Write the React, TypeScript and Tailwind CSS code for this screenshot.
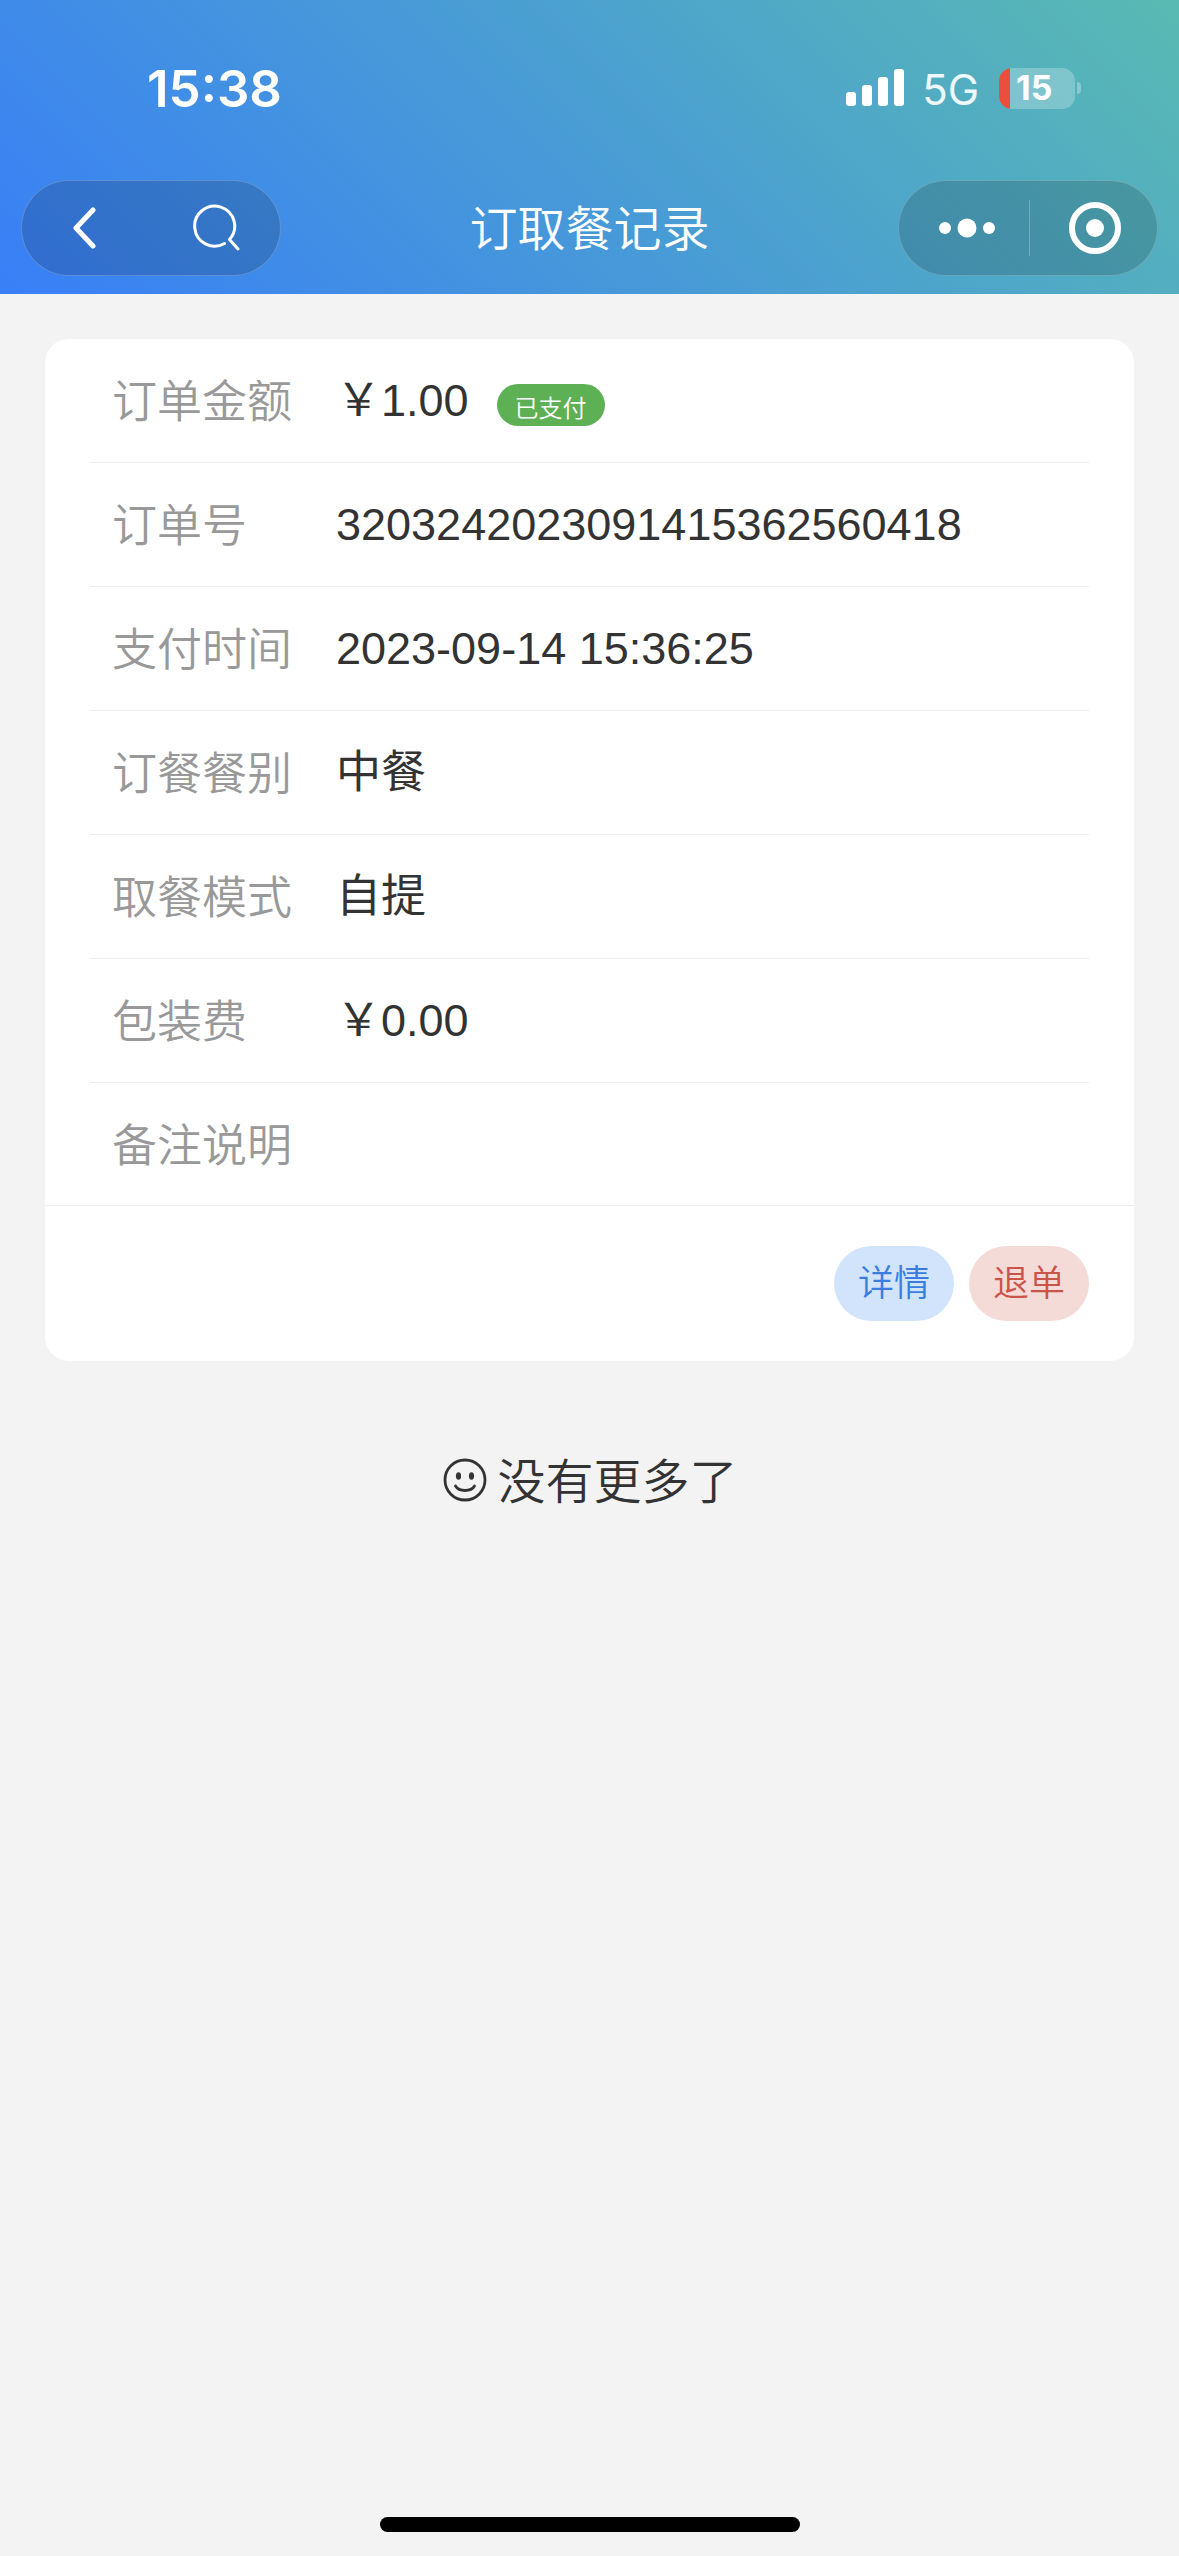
import type { ReactNode } from 'react';

type Field = {
  label: string;
  value: ReactNode;
};

const fields: Field[] = [
  {
    label: '订单金额',
    value: (
      <>
        ￥1.00
        <span className="mt-2 ml-7 flex h-[42px] items-center rounded-full bg-[#5db154] px-[18px] pt-2 text-[24px] leading-none font-[350] text-white">
          已支付
        </span>
      </>
    ),
  },
  { label: '订单号', value: '3203242023091415362560418' },
  { label: '支付时间', value: '2023-09-14 15:36:25' },
  { label: '订餐餐别', value: '中餐' },
  { label: '取餐模式', value: '自提' },
  { label: '包装费', value: '￥0.00' },
  { label: '备注说明', value: '' },
];

function StatusBar() {
  return (
    <div className="flex h-[176px] items-center justify-between pr-[98px] pl-[147px] font-['Inter',sans-serif] text-white">
      <span className="text-[51px] leading-none font-semibold">15:38</span>
      <div className="flex items-center">
        <svg width="58" height="38" viewBox="0 0 58 38" fill="currentColor" aria-hidden="true">
          <rect x="0" y="23" width="10" height="14" rx="3" />
          <rect x="16" y="16" width="10" height="21" rx="3" />
          <rect x="32" y="8" width="10" height="29" rx="3" />
          <rect x="48" y="0" width="10" height="37" rx="3" />
        </svg>
        <span className="mt-1 ml-[18px] text-[42px] leading-none text-white/90">5G</span>
        <div className="ml-5 flex items-center gap-[2px]">
          <div className="flex h-[41px] w-[76px] items-center overflow-hidden rounded-[13px] bg-white/25">
            <span className="h-full w-[11px] bg-[#ea4e3d]" />
            <span className="ml-[6px] text-[34px] leading-none font-bold">15</span>
          </div>
          <span className="h-3 w-1 rounded-r-full bg-white/30" />
        </div>
      </div>
    </div>
  );
}

function NavBar() {
  return (
    <nav className="mt-1 flex h-24 items-center justify-between px-[21px] text-white">
      <div className="flex h-full w-[260px] items-center rounded-full border border-white/20 bg-black/15">
        <button type="button" aria-label="返回" className="flex h-full flex-1 items-center justify-center">
          <svg width="28" height="46" viewBox="0 0 28 46" fill="none" stroke="currentColor" strokeWidth="5" strokeLinecap="round" strokeLinejoin="round">
            <path d="M20 5 L3 23 L20 41" />
          </svg>
        </button>
        <button type="button" aria-label="搜索" className="flex h-full flex-1 items-center justify-center">
          <svg width="48" height="48" viewBox="0 0 48 48" fill="none" stroke="currentColor" strokeWidth="3" strokeLinecap="round" strokeLinejoin="round">
            <path d="M32.5 39.5 A20 20 0 1 1 37.5 35.5 L46 45" />
          </svg>
        </button>
      </div>

      <h1 className="pt-1 text-[48px] leading-none font-[350]">订取餐记录</h1>

      <div className="flex h-full w-[260px] items-center rounded-full border border-white/20 bg-black/15">
        <button type="button" aria-label="更多" className="flex h-full flex-1 items-center justify-center pl-[6px]">
          <svg width="58" height="20" viewBox="0 0 58 20" fill="currentColor">
            <circle cx="7" cy="10" r="6" />
            <circle cx="29" cy="10" r="9.5" />
            <circle cx="51" cy="10" r="6" />
          </svg>
        </button>
        <span className="h-14 w-px bg-white/25" />
        <button type="button" aria-label="关闭" className="flex h-full flex-1 items-center justify-center pl-[3px]">
          <svg width="54" height="54" viewBox="0 0 54 54">
            <circle cx="27" cy="27" r="23" fill="none" stroke="currentColor" strokeWidth="6" />
            <circle cx="27" cy="27" r="9" fill="currentColor" />
          </svg>
        </button>
      </div>
    </nav>
  );
}

function OrderCard() {
  return (
    <section className="mx-[45px] mt-[45px] rounded-[24px] bg-white">
      <dl className="px-[45px]">
        {fields.map(({ label, value }, i) => (
          <div
            key={label}
            className={`flex items-center px-[22px] text-[45px] leading-none ${
              i < fields.length - 1 ? 'h-[124px] border-b border-[#eeeeee]' : 'h-[122px]'
            }`}
          >
            <dt className="w-[224px] shrink-0 pt-1 font-[350] text-[#999999]">{label}</dt>
            <dd className="flex items-center text-[#333333]">{value}</dd>
          </div>
        ))}
      </dl>
      <div className="flex justify-end gap-[15px] border-t border-[#eeeeee] px-[45px] py-10 text-[36px] leading-none font-[350]">
        <button type="button" className="h-[75px] rounded-full bg-[#d2e4fb] px-6 text-[#3a7de0]">
          详情
        </button>
        <button type="button" className="h-[75px] rounded-full bg-[#f5dbd8] px-6 text-[#cb544a]">
          退单
        </button>
      </div>
    </section>
  );
}

export default function App() {
  return (
    <div className="flex min-h-screen flex-col bg-[#f3f3f3] font-['Liberation_Sans','Noto_Sans_CJK_SC',sans-serif]">
      <header className="bg-[linear-gradient(45deg,#387ff7,#59bab2)] pb-[18px]">
        <StatusBar />
        <NavBar />
      </header>

      <main className="flex-1">
        <OrderCard />
        <p className="mt-[94px] flex items-center justify-center gap-2 text-[48px] leading-none text-[#333333]">
          <svg width="48" height="48" viewBox="0 0 48 48" fill="none" stroke="currentColor" strokeLinecap="round" aria-hidden="true">
            <circle cx="24" cy="23" r="20" strokeWidth="2.8" />
            <path d="M14.5 29 C18 35 30 35 33.5 29" strokeWidth="2.8" />
            <ellipse cx="17.5" cy="19" rx="2.6" ry="3.8" fill="currentColor" stroke="none" />
            <ellipse cx="30.5" cy="19" rx="2.6" ry="3.8" fill="currentColor" stroke="none" />
          </svg>
          <span className="pt-1 font-[350]">没有更多了</span>
        </p>
      </main>

      {/* Home indicator */}
      <div className="mx-auto mb-6 h-[15px] w-[420px] rounded-full bg-black" />
    </div>
  );
}
